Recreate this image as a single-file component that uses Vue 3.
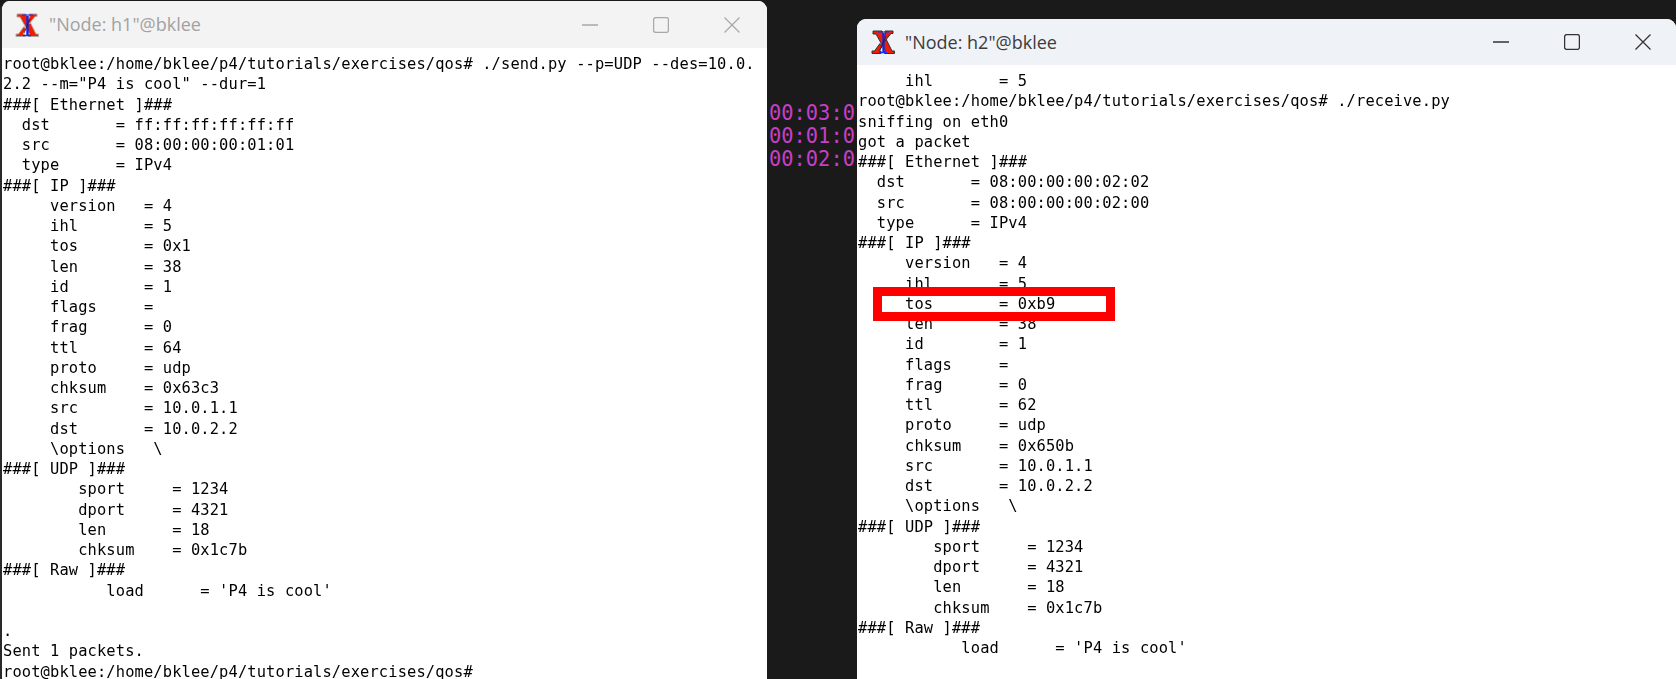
<script setup>
const h1 = [
  'root@bklee:/home/bklee/p4/tutorials/exercises/qos# ./send.py --p=UDP --des=10.0.',
  '2.2 --m="P4 is cool" --dur=1',
  '###[ Ethernet ]###',
  '  dst       = ff:ff:ff:ff:ff:ff',
  '  src       = 08:00:00:00:01:01',
  '  type      = IPv4',
  '###[ IP ]###',
  '     version   = 4',
  '     ihl       = 5',
  '     tos       = 0x1',
  '     len       = 38',
  '     id        = 1',
  '     flags     =',
  '     frag      = 0',
  '     ttl       = 64',
  '     proto     = udp',
  '     chksum    = 0x63c3',
  '     src       = 10.0.1.1',
  '     dst       = 10.0.2.2',
  '     \\options   \\',
  '###[ UDP ]###',
  '        sport     = 1234',
  '        dport     = 4321',
  '        len       = 18',
  '        chksum    = 0x1c7b',
  '###[ Raw ]###',
  "           load      = 'P4 is cool'",
  '',
  '.',
  'Sent 1 packets.',
  'root@bklee:/home/bklee/p4/tutorials/exercises/qos#',
].join('\n')

const h2 = [
  '     ihl       = 5',
  'root@bklee:/home/bklee/p4/tutorials/exercises/qos# ./receive.py',
  'sniffing on eth0',
  'got a packet',
  '###[ Ethernet ]###',
  '  dst       = 08:00:00:00:02:02',
  '  src       = 08:00:00:00:02:00',
  '  type      = IPv4',
  '###[ IP ]###',
  '     version   = 4',
  '     ihl       = 5',
  '     tos       = 0xb9',
  '     len       = 38',
  '     id        = 1',
  '     flags     =',
  '     frag      = 0',
  '     ttl       = 62',
  '     proto     = udp',
  '     chksum    = 0x650b',
  '     src       = 10.0.1.1',
  '     dst       = 10.0.2.2',
  '     \\options   \\',
  '###[ UDP ]###',
  '        sport     = 1234',
  '        dport     = 4321',
  '        len       = 18',
  '        chksum    = 0x1c7b',
  '###[ Raw ]###',
  "           load      = 'P4 is cool'",
].join('\n')

const clocks = ['00:03:0', '00:01:0', '00:02:0']
const windows = [
  { id: 'h1', title: '"Node: h1"@bklee', text: h1, active: false },
  { id: 'h2', title: '"Node: h2"@bklee', text: h2, active: true },
]
</script>

<template>
  <div class="desktop">
    <div class="clocks">
      <div v-for="c in clocks" :key="c" class="clock">{{ c }}</div>
    </div>
    <section v-for="w in windows" :key="w.id" class="win" :class="[w.id, { active: w.active }]">
      <header class="bar">
        <svg class="logo" viewBox="0 0 24 24" width="24" height="24">
          <path d="M2 1h9l10 20h2.5v2.5h-10V21h1L5 4H2z" fill="#f21c00" />
          <path d="M14 1h8v2.5h-2L14 11l-2-3 3-4.500h-1z" fill="#f21c00" />
          <path d="M9 13.500l2 3-3 4.500h2v2.500H1V21h2.500z" fill="#f21c00" />
          <path d="M7 2h11M8 22.700h8" stroke="#1a2cf0" stroke-width="1.200" fill="none" />
          <path d="M12.500 3v19" stroke="#1226e8" stroke-width="2.400" fill="none" />
          <path d="M15 6l-6 14" stroke="#141414" stroke-width="0.600" fill="none" />
        </svg>
        <span class="title">{{ w.title }}</span>
        <span class="ctl">
          <svg viewBox="0 0 16 16" width="16" height="16"><path d="M0 8h16" /></svg>
        </span>
        <span class="ctl">
          <svg viewBox="0 0 16 16" width="16" height="16"><rect x="0.6" y="0.6" width="14.8" height="14.8" rx="2" /></svg>
        </span>
        <span class="ctl">
          <svg viewBox="0 0 16 16" width="16" height="16"><path d="M0.5 0.5l15 15M15.5 0.5l-15 15" /></svg>
        </span>
      </header>
      <pre class="term">{{ w.text }}</pre>
      <div v-if="w.active" class="mark"></div>
    </section>
  </div>
</template>

<style>
html, body { margin: 0; background: #1a1a1a; }
</style>

<style scoped>
.desktop {
  position: relative;
  width: 1676px;
  height: 679px;
  overflow: hidden;
  background: #1a1a1a;
}
.clocks {
  position: absolute;
  left: 769px;
  top: 102px;
  font: 20.4px/23px "DejaVu Sans Mono", monospace;
  color: #c63fc6;
}
.win {
  position: absolute;
  display: flex;
  flex-direction: column;
  background: #fff;
  border-radius: 9px 9px 0 0;
  overflow: hidden;
}
.h1 { left: 0; top: 1px; width: 767px; height: 678px; border-left: 2px solid #2a2a2a; box-sizing: border-box; }
.h2 { left: 857px; top: 19px; width: 819px; height: 660px; }
.bar {
  display: flex;
  align-items: center;
  gap: 5px;
  flex: none;
  height: 47px;
  padding-left: 13px;
  padding-right: 2.5px;
  background: #f3f3f3;
  color: #a2a2a2;
  stroke: #a8a8a8;
}
.active .bar {
  height: 46px;
  padding-left: 14px;
  padding-right: 0;
  background: #eff3f8;
  color: #3c3c3c;
  stroke: #333;
}
.logo { flex: none; }
.title {
  flex: 1;
  margin-left: 5px;
  margin-top: -1px;
  font: 18px "Open Sans", sans-serif;
}
.ctl {
  flex: none;
  width: 66px;
  display: flex;
  justify-content: center;
}
.ctl svg { fill: none; stroke: inherit; stroke-width: 1.3; }
.term {
  margin: 0;
  padding: 6px 0 0 1px;
  font: 15.4px/20.25px "DejaVu Sans Mono", monospace;
  letter-spacing: 0.13px;
  color: #000;
  white-space: pre;
  overflow: hidden;
  filter: blur(0.35px);
}
.mark {
  position: absolute;
  left: 16px;
  top: 268px;
  width: 224px;
  height: 16px;
  border: 9px solid #fe0000;
}
</style>
